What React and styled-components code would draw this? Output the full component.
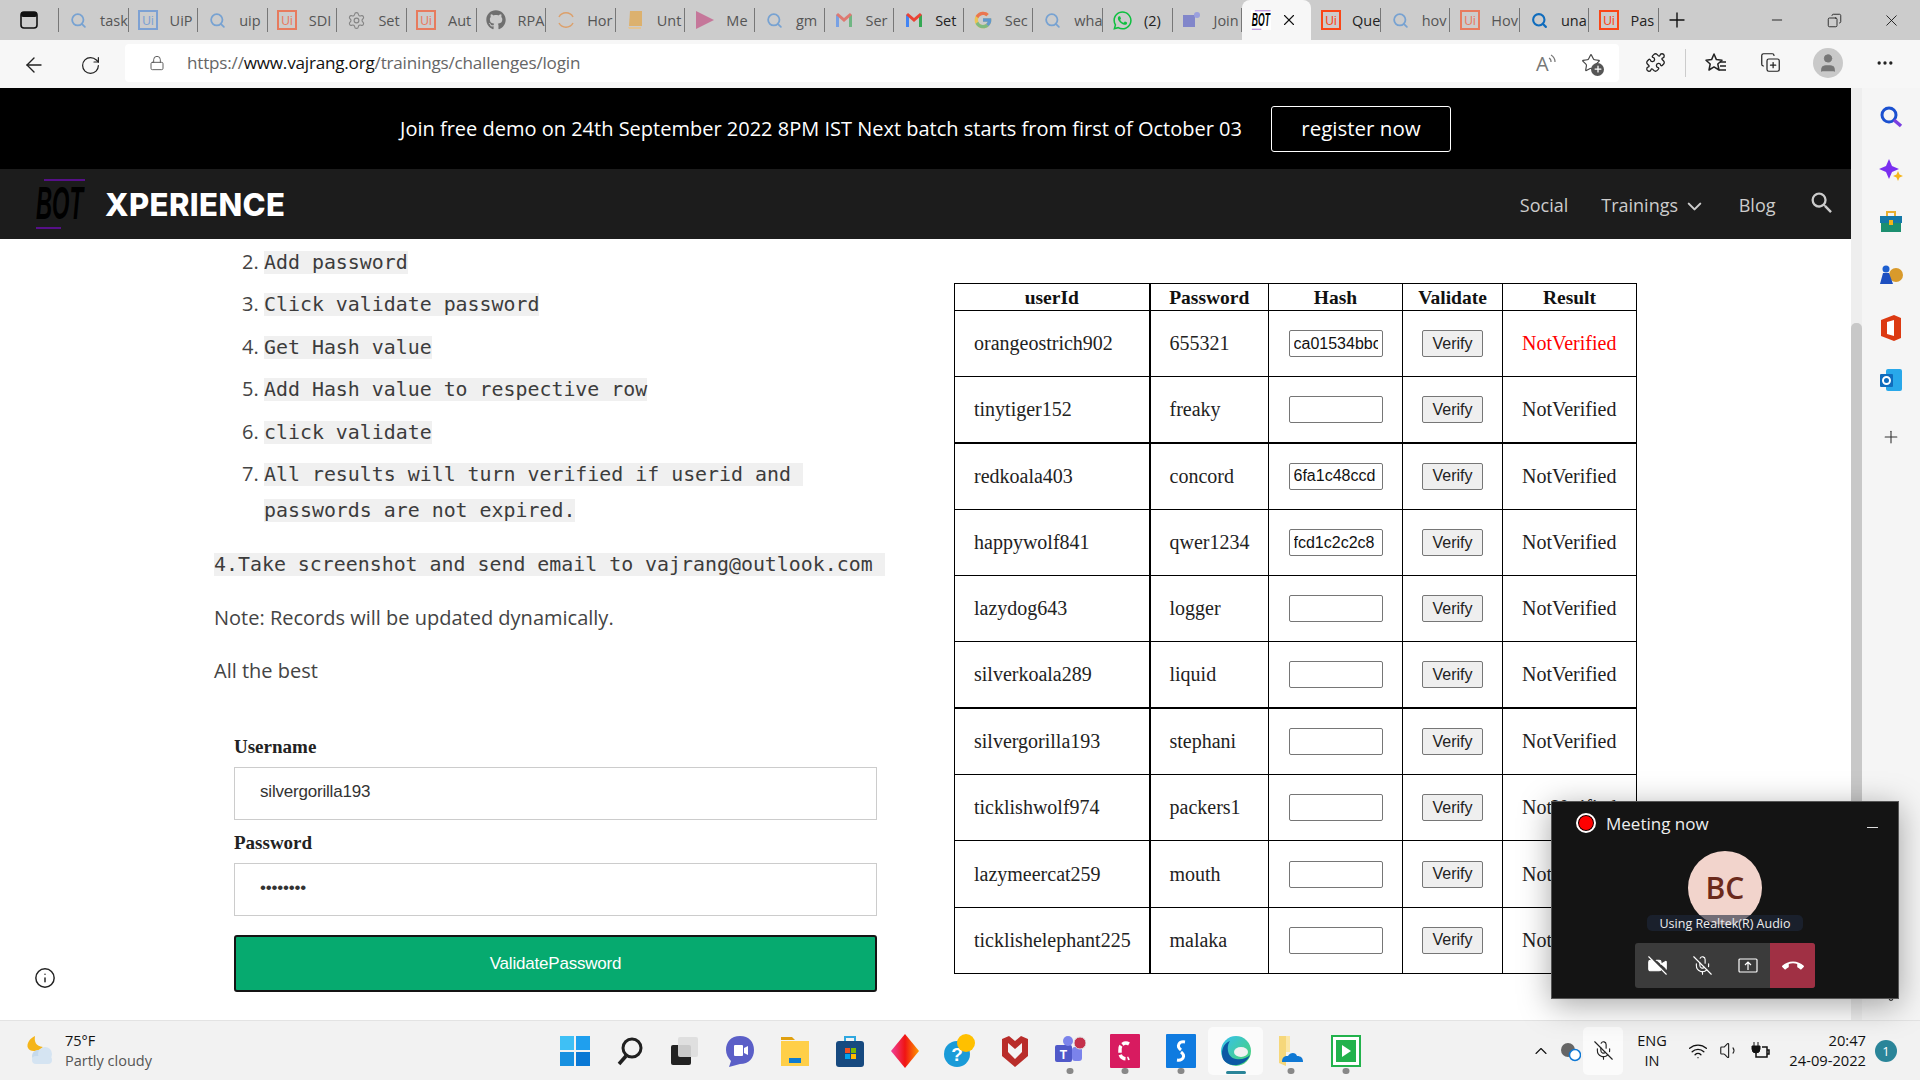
import React from "react";
import styled, { createGlobalStyle } from "styled-components";
import {
	ArrowLeft, RotateCw, Lock, Search, Settings, X, Plus, Minus, Copy, ChevronDown, ChevronUp,
	Info, Puzzle, Star, CopyPlus, Ellipsis, VideoOff, MicOff, Wifi, Volume1, User,
} from "lucide-react";
import { FaGithub, FaWhatsapp } from "react-icons/fa";
import { FcGoogle } from "react-icons/fc";
import { MdCallEnd, MdSearch } from "react-icons/md";

const GlobalStyle = createGlobalStyle`
	html, body { margin: 0; padding: 0; background: #fff; overflow: hidden; }
	* { box-sizing: border-box; }
`;

/* small drawn logos */
const UiLogo = ({ color = "#fa4616", size = 20 }) => (
	<svg width={size} height={size} viewBox="0 0 20 20">
		<rect x="1" y="1" width="18" height="18" fill="none" stroke={color} strokeWidth="2" />
		<text x="10" y="15" textAnchor="middle" fontSize="12" fontFamily="Liberation Sans" fill={color}>Ui</text>
	</svg>
);
const GmailLogo = () => (
	<svg width="20" height="20" viewBox="0 0 20 20">
		<path d="M2 17V5l3-1v13z" fill="#4285f4" />
		<path d="M15 17V4l3 1v12z" fill="#34a853" />
		<path d="M2 5l2-2 6 5 6-5 2 2-8 7z" fill="#ea4335" />
	</svg>
);
const BotMark = ({ width = 50, height = 52, color = "#000", line = "#6a0dad" }) => (
	<svg width={width} height={height} viewBox="0 0 50 52">
		<line x1="9" y1="2" x2="50" y2="2" stroke={line} strokeWidth="1.5" />
		<line x1="1" y1="50" x2="26" y2="50" stroke={line} strokeWidth="1.5" />
		<text transform="translate(1 41) scale(.93 1.9)" fontSize="24" fontWeight="700" fontStyle="italic" fontFamily="Liberation Sans" fill={color}>BOT</text>
	</svg>
);
const Glass = ({ color = "#3f87d6" }) => <Search size={17} color={color} strokeWidth={2.5} />;

const tabs = [
	{ icon: <Glass />, label: "task", dim: true },
	{ icon: <UiLogo color="#4a86d8" />, label: "UiP", dim: true },
	{ icon: <Glass />, label: "uip", dim: true },
	{ icon: <UiLogo />, label: "SDI", dim: true },
	{ icon: <Settings size={19} color="#555" strokeWidth={1.4} />, label: "Set", dim: true },
	{ icon: <UiLogo />, label: "Aut", dim: true },
	{ icon: <FaGithub size={20} color="#333" />, label: "RPA", dim: true },
	{ icon: <svg width="20" height="20" viewBox="0 0 20 20"><path d="M3 7a8 8 0 0 1 14 0M3 13a8 8 0 0 0 14 0" fill="none" stroke="#e8832a" strokeWidth="1.5" /></svg>, label: "Hor", dim: true },
	{ icon: <svg width="18" height="20" viewBox="0 0 18 20"><path d="M4 1h12v15H3z" fill="#e8a030" /><path d="M2 17h13v2H3z" fill="#f4c070" /></svg>, label: "Unt", dim: true },
	{ icon: <svg width="20" height="20" viewBox="0 0 20 20"><path d="M1 1l18 9-18 9z" fill="#c2407a" /></svg>, label: "Me", dim: true },
	{ icon: <Glass />, label: "gm", dim: true },
	{ icon: <GmailLogo />, label: "Ser", dim: true },
	{ icon: <GmailLogo />, label: "Set" },
	{ icon: <FcGoogle size={20} />, label: "Sec", dim: true },
	{ icon: <Glass />, label: "wha", dim: true },
	{ icon: <FaWhatsapp size={21} color="#0fbf40" />, label: "(2)" },
	{ icon: <svg width="20" height="20" viewBox="0 0 20 20"><rect x="1" y="5" width="12" height="12" fill="#5059c9" /><circle cx="15" cy="5" r="3" fill="#7b83eb" /></svg>, label: "Join", dim: true },
	{ active: true },
	{ icon: <UiLogo />, label: "Que" },
	{ icon: <Glass />, label: "hov", dim: true },
	{ icon: <UiLogo />, label: "Hov", dim: true },
	{ icon: <Search size={17} color="#0f6cbd" strokeWidth={3} />, label: "una" },
	{ icon: <UiLogo />, label: "Pas" },
];

const rows = [
	["orangeostrich902", "655321", "ca01534bbc2d9", "red"],
	["tinytiger152", "freaky", ""],
	["redkoala403", "concord", "6fa1c48ccd"],
	["happywolf841", "qwer1234", "fcd1c2c2c8"],
	["lazydog643", "logger", ""],
	["silverkoala289", "liquid", ""],
	["silvergorilla193", "stephani", ""],
	["ticklishwolf974", "packers1", ""],
	["lazymeercat259", "mouth", ""],
	["ticklishelephant225", "malaka", ""],
];

const steps = [
	"Add password",
	"Click validate password",
	"Get Hash value",
	"Add Hash value to respective row",
	"click validate",
	"All results will turn verified if userid and passwords are not expired.",
];

const sideIcons = [
	<svg width="24" height="24" viewBox="0 0 24 24" key="s"><circle cx="10" cy="10" r="7" fill="none" stroke="#1a50d0" strokeWidth="3" /><path d="M15 15l7 6" stroke="#7a3fe0" strokeWidth="3.5" /></svg>,
	<svg width="24" height="24" viewBox="0 0 24 24" key="b"><path d="M10 1l3 7 7 3-7 3-3 7-3-7-7-3 7-3z" fill="#7a2ff0" /><path d="M19 13l1.500 3.500L24 18l-3.500 1.500L19 23l-1.500-3.500L14 18l3.500-1.500z" fill="#f5b51a" /></svg>,
	<svg width="24" height="22" viewBox="0 0 24 22" key="t"><path d="M8 5V1h8v4" fill="none" stroke="#eab030" strokeWidth="2" /><rect x="1" y="5" width="22" height="7" fill="#1478a8" /><rect x="2" y="12" width="20" height="9" fill="#1c8f70" /><rect x="10" y="9" width="4" height="5" fill="#f5b51a" /></svg>,
	<svg width="24" height="22" viewBox="0 0 24 22" key="g"><circle cx="17" cy="11" r="7" fill="#d99a2b" /><circle cx="7" cy="5" r="3.500" fill="#1d5fd0" /><path d="M1 20l3-11h6l4 11z" fill="#1d4fc0" /></svg>,
	<svg width="24" height="28" viewBox="0 0 24 28" key="o"><path d="M2 6l13-5 7 3v20l-7 3L2 22z" fill="#dc3a12" /><path d="M8 8l7-2v16l-7-2z" fill="#fff" /></svg>,
	<svg width="24" height="24" viewBox="0 0 24 24" key="m"><rect x="7" y="1" width="16" height="22" rx="2" fill="#28a8ea" /><rect x="1" y="6" width="13" height="13" rx="1" fill="#0f6cbd" /><circle cx="7.500" cy="12.500" r="3.500" fill="none" stroke="#fff" strokeWidth="2" /></svg>,
	<Plus size={20} color="#333" strokeWidth={1.3} key="p" />,
];

const apps = [
	{ icon: <svg width="30" height="30" viewBox="0 0 30 30"><rect width="14" height="14" fill="#3fc0f5" /><rect x="16" width="14" height="14" fill="#1f9fee" /><rect y="16" width="14" height="14" fill="#1790e0" /><rect x="16" y="16" width="14" height="14" fill="#0a78d4" /></svg> },
	{ icon: <svg width="30" height="30" viewBox="0 0 30 30"><circle cx="17" cy="12" r="9" fill="none" stroke="#202020" strokeWidth="3" /><path d="M11 20l-7 8" stroke="#202020" strokeWidth="3.500" /></svg> },
	{ icon: <svg width="30" height="30" viewBox="0 0 30 30"><rect x="1" y="9" width="20" height="20" rx="2" fill="#222" /><rect x="8" y="1" width="20" height="20" rx="2" fill="#ddd" opacity=".9" /></svg> },
	{ icon: <svg width="30" height="32" viewBox="0 0 30 32"><path d="M15 1c9 0 14 6 14 14s-5 14-14 14l-11 3 2-6C3 23 1 19 1 15 1 7 6 1 15 1z" fill="#5b5fc7" /><rect x="9" y="10" width="9" height="11" rx="1" fill="#fff" /><path d="M19 13l4-2v9l-4-2z" fill="#fff" /></svg> },
	{ icon: <svg width="30" height="30" viewBox="0 0 30 30"><path d="M1 1h11l3 3H1z" fill="#e0a010" /><rect x="1" y="5" width="28" height="25" fill="#ffcf48" /><rect x="9" y="22" width="12" height="5" fill="#0f7bd0" /></svg> },
	{ icon: <svg width="30" height="32" viewBox="0 0 30 32"><path d="M10 7V2h10v5" fill="none" stroke="#30a8e0" strokeWidth="2" /><rect x="1" y="6" width="28" height="26" rx="3" fill="#174a80" /><rect x="10" y="13" width="5" height="5" fill="#f25022" /><rect x="16" y="13" width="5" height="5" fill="#7fba00" /><rect x="10" y="19" width="5" height="5" fill="#00a4ef" /><rect x="16" y="19" width="5" height="5" fill="#ffb900" /></svg> },
	{ icon: <svg width="30" height="34" viewBox="0 0 30 34"><defs><linearGradient id="dia" x1="0" x2="1"><stop offset="0" stopColor="#f0409a" /><stop offset=".5" stopColor="#f01414" /><stop offset="1" stopColor="#ff9a00" /></linearGradient></defs><path d="M15 0l14 17-14 17L1 17z" fill="url(#dia)" /></svg> },
	{ icon: <svg width="32" height="34" viewBox="0 0 32 34"><circle cx="13" cy="20" r="13" fill="#1a9bd8" /><text x="13" y="27" textAnchor="middle" fontSize="19" fontWeight="700" fontFamily="Liberation Sans" fill="#fff">?</text><circle cx="22" cy="9" r="9" fill="#ffc000" /></svg> },
	{ icon: <svg width="28" height="32" viewBox="0 0 28 32"><path d="M1 4l7-3 6 5 6-5 7 3v17L14 32 1 21z" fill="#b92d2a" /><path d="M7 8l7 6 7-6v9l-7 7-7-7z" fill="#f4f4f4" /></svg>, dot: false },
	{ icon: <svg width="32" height="32" viewBox="0 0 32 32"><rect x="1" y="10" width="17" height="17" rx="2" fill="#5059c9" /><rect x="18" y="12" width="10" height="14" rx="3" fill="#7b83eb" /><circle cx="14" cy="6" r="5" fill="#7b83eb" /><text x="9.500" y="24" textAnchor="middle" fontSize="12" fontWeight="700" fontFamily="Liberation Sans" fill="#fff">T</text><circle cx="26" cy="8" r="6" fill="#c4314b" stroke="#ddd" /></svg>, dot: true },
	{ icon: <svg width="30" height="34" viewBox="0 0 30 34"><rect width="30" height="34" rx="1" fill="#d81b60" /><path d="M19 10a6 6 0 0 0-9 6v2a6 6 0 0 0 9 6" fill="none" stroke="#fff" strokeWidth="3.500" strokeDasharray="7 2" /></svg>, dot: true },
	{ icon: <svg width="30" height="34" viewBox="0 0 30 34"><rect width="30" height="34" rx="1" fill="#0f7be0" /><path d="M19 8c-6-1-9 4-4 8M11 26c6 1 9-4 4-8" fill="none" stroke="#fff" strokeWidth="3" /></svg>, dot: true },
	{ icon: <svg width="32" height="32" viewBox="0 0 32 32"><defs><linearGradient id="edge" x1="0" y1="0" x2="1" y2="1"><stop offset="0" stopColor="#35c1f1" /><stop offset="1" stopColor="#4bd46a" /></linearGradient></defs><circle cx="16" cy="16" r="15" fill="url(#edge)" /><path d="M30 20C26 31 9 34 3 24 0 16 4 8 10 6c-4 5-3 17 6 18 6 1 11-1 14-4z" fill="#0c59a4" /><ellipse cx="21" cy="17" rx="7" ry="5" fill="#f2f2f2" /></svg>, active: true },
	{ icon: <svg width="26" height="32" viewBox="0 0 26 32"><path d="M1 1h7v30l-7-3z" fill="#f6d77a" /><path d="M8 1h4v16H8z" fill="#fbe6a6" /><path d="M4 27c0-6 4-6 6-6 2-4 8-4 9 0 4 0 6 2 6 6z" fill="#0f78d4" /></svg>, dot: true },
	{ icon: <svg width="30" height="32" viewBox="0 0 30 32"><rect width="30" height="32" fill="#fff" stroke="#22b24c" strokeWidth="4" /><rect x="5" y="5" width="20" height="22" fill="#22b24c" /><path d="M11 10l9 6-9 6z" fill="#fff" /></svg>, dot: true },
];

function App() {
	return (
		<Screen>
			<GlobalStyle />
			<TabStrip>
				<WorkspaceSlot>
					<svg width="18" height="18" viewBox="0 0 18 18"><rect x="1" y="1" width="16" height="16" rx="3" fill="none" stroke="#111" strokeWidth="1.600" /><rect x="1" y="1" width="16" height="5" rx="2" fill="#111" /></svg>
				</WorkspaceSlot>
				{tabs.map((t, i) =>
					t.active ? (
						<ActiveTab key={i}>
							<Favicon><BotMark width={20} height={20} /></Favicon>
							<X size={18} strokeWidth={1.500} color="#111" />
						</ActiveTab>
					) : (
						<Tab key={i}>
							<TabIcon $dim={t.dim}>{t.icon}</TabIcon>
							<TabLabel $dim={t.dim}>{t.label}</TabLabel>
						</Tab>
					)
				)}
				<NewTab><Plus size={24} strokeWidth={1.400} color="#111" /></NewTab>
				<WindowControls>
					<WindowButton><Minus size={16} strokeWidth={1.300} color="#111" /></WindowButton>
					<WindowButton><Copy size={15} strokeWidth={1.300} color="#111" style={{ transform: "scaleX(-1)" }} /></WindowButton>
					<WindowButton><X size={19} strokeWidth={1.100} color="#111" /></WindowButton>
				</WindowControls>
			</TabStrip>

			<Toolbar>
				<ToolSlot><ArrowLeft size={24} strokeWidth={1.400} color="#222" /></ToolSlot>
				<ToolSlot><RotateCw size={21} strokeWidth={1.400} color="#222" /></ToolSlot>
				<AddressBar>
					<Lock size={16} strokeWidth={1.400} color="#555" />
					<Url>https://<UrlHost>www.vajrang.org</UrlHost>/trainings/challenges/login</Url>
					<AddressTools>
						<AddressSlot>
							<svg width="24" height="30" viewBox="0 0 24 30"><text x="2" y="23" fontSize="20" fontFamily="Open Sans" fill="#777">A</text><path d="M15 10a4 4 0 0 1 2 4M17 7a8 8 0 0 1 4 7" fill="none" stroke="#777" strokeWidth="1.200" /></svg>
						</AddressSlot>
						<AddressSlot>
							<Star size={20} strokeWidth={1.400} color="#444" />
							<FavBadge><Plus size={10} strokeWidth={3} color="#fff" /></FavBadge>
						</AddressSlot>
					</AddressTools>
				</AddressBar>
				<ToolGroup>
					<ToolIcon><Puzzle size={21} strokeWidth={1.500} color="#222" /></ToolIcon>
					<ToolDivider />
					<ToolIcon>
						<svg width="24" height="24" viewBox="0 0 24 24"><path d="M10 3l2.400 5.600 5.600.6-4.200 3.800 1.200 6-5-3.100-5 3.100 1.200-6L2 9.200l5.600-.6z" fill="none" stroke="#222" strokeWidth="1.500" strokeLinejoin="round" /><path d="M16 11h6M16 15h6M15 19h7" stroke="#222" strokeWidth="1.500" /></svg>
					</ToolIcon>
					<ToolIcon $offset="14px"><CopyPlus size={21} strokeWidth={1.400} color="#222" /></ToolIcon>
					<ToolIcon $offset="18px">
						<Avatar><User size={22} color="#777" fill="#777" strokeWidth={1} /></Avatar>
					</ToolIcon>
					<ToolIcon $offset="17px"><Ellipsis size={20} color="#222" /></ToolIcon>
				</ToolGroup>
			</Toolbar>

			<Body>
				<Page>
					<Banner>
						<BannerText>Join free demo on 24th September 2022 8PM IST Next batch starts from first of October 03</BannerText>
						<RegisterButton>register now</RegisterButton>
					</Banner>
					<Nav>
						<Brand>
							<BotMark />
							<BrandName>XPERIENCE</BrandName>
						</Brand>
						<NavLinks>
							<NavLink>Social</NavLink>
							<NavLink>Trainings <ChevronDown size={23} strokeWidth={2.200} style={{ verticalAlign: "-6px" }} /></NavLink>
							<NavLink>Blog</NavLink>
							<NavSearch><MdSearch size={28} color="#ccc" /></NavSearch>
						</NavLinks>
					</Nav>
					<Content>
						<LeftColumn>
							<Steps start={2}>
								{steps.map((s) => (
									<Step key={s}><Code>{s}</Code></Step>
								))}
							</Steps>
							<Instruction><Code>4.Take screenshot and send email to vajrang@outlook.com </Code></Instruction>
							<Paragraph>Note: Records will be updated dynamically.</Paragraph>
							<Paragraph>All the best</Paragraph>
							<LoginForm>
								<FieldLabel>Username</FieldLabel>
								<TextInput readOnly value="silvergorilla193" />
								<FieldLabel>Password</FieldLabel>
								<TextInput readOnly type="password" value="stephani" />
								<ValidateButton type="button">ValidatePassword</ValidateButton>
							</LoginForm>
							<InfoSpot><Info size={22} strokeWidth={1.600} color="#222" /></InfoSpot>
						</LeftColumn>
						<UsersTable>
							<colgroup>
								<col width="195" /><col width="119" /><col width="134" /><col width="100" /><col width="134" />
							</colgroup>
							<thead>
								<tr>
									<HeadCell $strong>userId</HeadCell>
									<HeadCell>Password</HeadCell>
									<HeadCell>Hash</HeadCell>
									<HeadCell>Validate</HeadCell>
									<HeadCell>Result</HeadCell>
								</tr>
							</thead>
							<tbody>
								{rows.map((r, i) => (
									<BodyRow key={r[0]} $thick={i === 1 || i === 5}>
										<Cell $strong>{r[0]}</Cell>
										<Cell>{r[1]}</Cell>
										<CenterCell><HashInput readOnly value={r[2]} /></CenterCell>
										<CenterCell><VerifyButton type="button">Verify</VerifyButton></CenterCell>
										<Cell $color={r[3]}>NotVerified</Cell>
									</BodyRow>
								))}
							</tbody>
						</UsersTable>
					</Content>
				</Page>
				<ScrollTrack><ScrollThumb /></ScrollTrack>
				<SideRail>
					{sideIcons.map((ic, i) => (
						<SideIcon key={i} $last={i === sideIcons.length - 1}>{ic}</SideIcon>
					))}
					<SideFooter><Settings size={20} strokeWidth={1.400} color="#333" /></SideFooter>
				</SideRail>
			</Body>

			<Taskbar>
				<Weather>
					<svg width="32" height="32" viewBox="0 0 32 32"><path d="M11 1c-1 6 1 10 8 11-3 4-13 6-15 1C2 9 6 3 11 1z" fill="#f5b51a" /><circle cx="14" cy="21" r="6" fill="#c5d9ec" /><circle cx="21" cy="19" r="7" fill="#d5e4f2" /><rect x="8" y="21" width="20" height="8" rx="4" fill="#d5e4f2" /></svg>
					<WeatherText>
						<Temp>75°F</Temp>
						<Forecast>Partly cloudy</Forecast>
					</WeatherText>
				</Weather>
				<AppRow>
					{apps.map((a, i) => (
						<AppCell key={i} $active={a.active} $dot={a.dot}>{a.icon}</AppCell>
					))}
				</AppRow>
				<Tray>
					<TrayItem $w="32px"><ChevronUp size={20} strokeWidth={1.300} color="#111" /></TrayItem>
					<TrayItem $w="26px">
						<svg width="22" height="22" viewBox="0 0 22 22"><circle cx="9" cy="10" r="7" fill="#666" /><circle cx="16" cy="15" r="5.500" fill="#fff" stroke="#0f78d4" strokeWidth="1.500" /></svg>
					</TrayItem>
					<MicPill><MicOff size={21} strokeWidth={1.300} color="#222" /></MicPill>
					<LangBlock><span>ENG</span><span>IN</span></LangBlock>
					<TrayItem $w="34px"><Wifi size={20} strokeWidth={1.600} color="#111" /></TrayItem>
					<TrayItem $w="29px"><Volume1 size={21} strokeWidth={1.300} color="#222" /></TrayItem>
					<TrayItem $w="32px">
						<svg width="22" height="22" viewBox="0 0 22 22"><path d="M5 2v4M9 2v4M3 6h8v3a4 4 0 0 1-8 0z" fill="#111" stroke="#111" /><path d="M7 13v4h11V7h-5M18 10h2v4h-2" fill="none" stroke="#111" strokeWidth="1.500" /></svg>
					</TrayItem>
					<Clock><span>20:47</span><span>24-09-2022</span></Clock>
					<Badge>1</Badge>
				</Tray>
			</Taskbar>

			<MeetingPopup>
				<MeetingHeader>
					<RecordDot />
					<MeetingTitle>Meeting now</MeetingTitle>
					<MeetingMin />
				</MeetingHeader>
				<MeetingAvatar>BC</MeetingAvatar>
				<AudioPill>Using Realtek(R) Audio</AudioPill>
				<CallBar>
					<CallButton><VideoOff size={21} color="#fff" fill="#fff" strokeWidth={1.300} /></CallButton>
					<CallButton><MicOff size={21} color="#fff" strokeWidth={1.300} /></CallButton>
					<CallButton>
						<svg width="20" height="16" viewBox="0 0 20 16"><rect x="1" y="1" width="18" height="13" rx="1" fill="none" stroke="#fff" strokeWidth="1.200" /><path d="M10 12V4M7 7l3-3 3 3" fill="none" stroke="#fff" strokeWidth="1.200" /></svg>
					</CallButton>
					<HangUp><MdCallEnd size={22} color="#fff" /></HangUp>
				</CallBar>
			</MeetingPopup>
		</Screen>
	);
}

const Screen = styled.div`
	position: relative;
	width: 1920px;
	height: 1080px;
	display: flex;
	flex-direction: column;
	overflow: hidden;
	font-family: "Open Sans", sans-serif;
`;
const TabStrip = styled.div`
	height: 40px;
	flex: none;
	display: flex;
	align-items: stretch;
	background: #ccc;
`;
const WorkspaceSlot = styled.div`
	width: 59px;
	display: flex;
	align-items: center;
	justify-content: center;
	border-right: 1px solid #777;
	margin: 8px 0;
`;
const Tab = styled.div`
	width: 69.6px;
	margin: 8px 0;
	padding-left: 9px;
	display: flex;
	align-items: center;
	border-right: 1px solid #777;
	overflow: hidden;
`;
const TabIcon = styled.div`
	width: 21px;
	flex: none;
	display: flex;
	justify-content: center;
	opacity: ${(p) => (p.$dim ? 0.6 : 1)};
`;
const TabLabel = styled.span`
	margin-left: 11px;
	font-size: 14.500px;
	white-space: nowrap;
	color: ${(p) => (p.$dim ? "#555" : "#222")};
`;
const ActiveTab = styled.div`
	width: 69px;
	display: flex;
	align-items: center;
	justify-content: space-between;
	padding: 0 13px 0 9px;
	background: #f7f7f7;
	border-radius: 8px 8px 0 0;
`;
const Favicon = styled.div`
	width: 20px;
	height: 20px;
	background: #fff;
	display: flex;
`;
const NewTab = styled.div`
	width: 36px;
	display: flex;
	align-items: center;
	justify-content: center;
`;
const WindowControls = styled.div`
	margin-left: auto;
	display: flex;
`;
const WindowButton = styled.div`
	width: 57.3px;
	display: flex;
	align-items: center;
	justify-content: center;
`;
const Toolbar = styled.div`
	height: 48px;
	flex: none;
	display: flex;
	align-items: center;
	gap: 12px;
	padding-left: 12px;
	padding-top: 2px;
	background: #f7f7f7;
`;
const ToolSlot = styled.div`
	width: 44px;
	display: flex;
	justify-content: center;
`;
const AddressBar = styled.div`
	width: 1494px;
	height: 38px;
	margin-left: 1px;
	margin-bottom: 5px;
	display: flex;
	align-items: center;
	padding-left: 24px;
	background: #fff;
	border-radius: 4px;
`;
const Url = styled.span`
	margin-left: 22px;
	font-size: 17.100px;
	letter-spacing: -0.200px;
	color: #666;
`;
const UrlHost = styled.span`
	color: #111;
`;
const AddressTools = styled.div`
	margin-left: auto;
	padding-right: 10px;
	display: flex;
	align-items: center;
	gap: 9px;
`;
const AddressSlot = styled.div`
	position: relative;
	width: 36px;
	display: flex;
	justify-content: center;
`;
const FavBadge = styled.span`
	position: absolute;
	right: 5px;
	bottom: -3px;
	width: 13px;
	height: 13px;
	display: flex;
	align-items: center;
	justify-content: center;
	background: #555;
	border-radius: 50%;
`;
const ToolGroup = styled.div`
	display: flex;
	align-items: center;
	margin-left: 4px;
	margin-bottom: 5px;
`;
const ToolIcon = styled.div`
	width: 40px;
	margin-left: ${(p) => p.$offset || 0};
	display: flex;
	justify-content: center;
`;
const ToolDivider = styled.div`
	width: 1px;
	height: 28px;
	margin: 0 10px;
	background: #ccc;
`;
const Avatar = styled.div`
	width: 30px;
	height: 30px;
	display: flex;
	align-items: center;
	justify-content: center;
	background: #c9c9c9;
	border-radius: 50%;
`;
const Body = styled.div`
	flex: 1;
	min-height: 0;
	display: flex;
`;
const Page = styled.div`
	width: 1851px;
	flex: none;
	display: flex;
	flex-direction: column;
	background: #fff;
`;
const Banner = styled.div`
	height: 81px;
	flex: none;
	display: flex;
	align-items: center;
	justify-content: center;
	gap: 29px;
	background: #000;
`;
const BannerText = styled.span`
	font-size: 20px;
	color: #fff;
`;
const RegisterButton = styled.button`
	width: 180px;
	height: 46px;
	padding: 0 0 2px;
	font-family: "Open Sans", sans-serif;
	font-size: 20.500px;
	color: #fff;
	background: transparent;
	border: 1px solid #fff;
	border-radius: 3px;
`;
const Nav = styled.div`
	height: 70px;
	flex: none;
	display: flex;
	align-items: center;
	justify-content: space-between;
	padding: 0 15px 0 35px;
	background: #1c1c1c;
`;
const Brand = styled.div`
	display: flex;
	align-items: center;
	gap: 20px;
`;
const BrandName = styled.span`
	font-family: "Inter", sans-serif;
	font-size: 31px;
	font-weight: 800;
	letter-spacing: 0.400px;
	color: #fff;
`;
const NavLinks = styled.div`
	display: flex;
	align-items: center;
	gap: 33px;
	padding-top: 2px;
`;
const NavLink = styled.a`
	font-size: 18px;
	color: #ccc;
`;
const NavSearch = styled.span`
	display: flex;
	margin: -4px 0 0 -0.500px;
`;
const Content = styled.div`
	position: relative;
	flex: 1;
	min-height: 0;
	display: flex;
	align-items: flex-start;
	padding-left: 214px;
`;
const LeftColumn = styled.div`
	width: 740px;
	flex: none;
	padding-top: 5px;
`;
const Steps = styled.ol`
	width: 672px;
	margin: 0;
	padding-left: 50px;
	font-size: 20px;
	color: #444;
`;
const Step = styled.li`
	line-height: 35.500px;
	margin-bottom: 5.900px;
`;
const Code = styled.code`
	font-family: "DejaVu Sans Mono", monospace;
	font-size: 19.900px;
	white-space: pre-wrap;
	color: #3c3c3c;
	background: #f0f0f0;
`;
const Instruction = styled.p`
	margin: 18px 0 0;
	line-height: 36px;
`;
const Paragraph = styled.p`
	margin: 17px 0 0;
	font-size: 20px;
	line-height: 36px;
	color: #444;
`;
const LoginForm = styled.form`
	width: 643px;
	margin: 47px 0 0 20px;
	display: flex;
	flex-direction: column;
`;
const FieldLabel = styled.label`
	font-family: "Liberation Serif", serif;
	font-size: 19px;
	font-weight: 700;
	line-height: 22px;
	color: #222;
	margin-bottom: 9.500px;
`;
const TextInput = styled.input`
	height: 53px;
	margin-bottom: 11.500px;
	padding: 0 25px 4px;
	font-family: "Liberation Sans", sans-serif;
	font-size: 17px;
	letter-spacing: -0.200px;
	color: #333;
	background: #fff;
	border: 1px solid #ccc;
	outline: none;
`;
const ValidateButton = styled.button`
	height: 57px;
	margin-top: 7.500px;
	font-family: "Liberation Sans", sans-serif;
	font-size: 17px;
	letter-spacing: -0.200px;
	color: #fff;
	background: #06aa6f;
	border: 2px solid #141414;
	border-radius: 3px;
`;
const InfoSpot = styled.div`
	position: absolute;
	left: 34px;
	top: 728px;
	display: flex;
`;
const UsersTable = styled.table`
	width: 682px;
	margin-top: 44px;
	flex: none;
	table-layout: fixed;
	border-collapse: collapse;
	font-family: "Liberation Serif", serif;
	font-size: 20px;
	color: #111;
`;
const HeadCell = styled.th`
	height: 27px;
	padding: 1px 0 0;
	font-size: 19.500px;
	font-weight: 700;
	border: 1px solid #000;
	border-right-width: ${(p) => (p.$strong ? "2px" : "1px")};
`;
const BodyRow = styled.tr`
	height: 66.300px;
	border-bottom: ${(p) => (p.$thick ? "2px" : "1px")} solid #000;
`;
const Cell = styled.td`
	padding: 0 0 0 19px;
	white-space: nowrap;
	color: ${(p) => p.$color || "#222"};
	border: 1px solid #000;
	border-bottom: none;
	border-right-width: ${(p) => (p.$strong ? "2px" : "1px")};
`;
const CenterCell = styled.td`
	padding: 0;
	text-align: center;
	border: 1px solid #000;
	border-bottom: none;
`;
const HashInput = styled.input`
	width: 94px;
	height: 27px;
	padding: 1px 4px;
	font-family: "Liberation Sans", sans-serif;
	font-size: 16px;
	color: #111;
	background: #fff;
	border: 1px solid #767676;
	border-radius: 2px;
	outline: none;
	vertical-align: middle;
`;
const VerifyButton = styled.button`
	width: 61px;
	height: 27px;
	padding: 0;
	font-family: "Liberation Sans", sans-serif;
	font-size: 16px;
	color: #222;
	background: #efefef;
	border: 1px solid #767676;
	border-radius: 2px;
	vertical-align: middle;
`;
const ScrollTrack = styled.div`
	width: 11px;
	flex: none;
	padding-top: 235px;
	background: #eee;
`;
const ScrollThumb = styled.div`
	height: 480px;
	background: #c8c8c8;
	border-radius: 5px 5px 0 0;
`;
const SideRail = styled.div`
	flex: 1;
	display: flex;
	flex-direction: column;
	align-items: center;
	padding: 14px 0 18px;
	gap: 22.700px;
	background: #f5f5f5;
`;
const SideIcon = styled.div`
	height: 30px;
	display: flex;
	align-items: center;
	justify-content: center;
	margin-top: ${(p) => (p.$last ? "4px" : "0")};
`;
const SideFooter = styled.div`
	margin-top: auto;
	display: flex;
`;
const Taskbar = styled.div`
	height: 60px;
	flex: none;
	display: flex;
	align-items: center;
	background: #f2f2f2;
	border-top: 1px solid #e3e3e3;
`;
const Weather = styled.div`
	width: 547.500px;
	flex: none;
	padding-left: 24px;
	display: flex;
	align-items: center;
	gap: 9px;
`;
const WeatherText = styled.div`
	display: flex;
	flex-direction: column;
	gap: 2px;
`;
const Temp = styled.span`
	font-size: 14.500px;
	line-height: 18px;
	color: #111;
`;
const Forecast = styled.span`
	font-size: 14.500px;
	line-height: 18px;
	color: #555;
`;
const AppRow = styled.div`
	display: flex;
`;
const AppCell = styled.div`
	position: relative;
	width: 55.050px;
	height: 48px;
	display: flex;
	align-items: center;
	justify-content: center;
	background: ${(p) => (p.$active ? "#fbfbfb" : "transparent")};
	border-radius: 5px;
	&::after {
		content: "";
		display: ${(p) => (p.$dot || p.$active ? "block" : "none")};
		position: absolute;
		left: 50%;
		bottom: 1px;
		width: ${(p) => (p.$active ? "20px" : "7px")};
		height: ${(p) => (p.$active ? "3px" : "6px")};
		transform: translateX(-50%);
		background: ${(p) => (p.$active ? "#2a8599" : "#888")};
		border-radius: 3px;
	}
`;
const Tray = styled.div`
	margin-left: auto;
	padding-right: 23px;
	display: flex;
	align-items: center;
`;
const TrayItem = styled.div`
	width: ${(p) => p.$w};
	display: flex;
	justify-content: center;
`;
const MicPill = styled.div`
	width: 40px;
	height: 48px;
	display: flex;
	align-items: center;
	justify-content: center;
	background: #fbfbfb;
	border-radius: 5px;
`;
const LangBlock = styled.div`
	width: 58px;
	display: flex;
	flex-direction: column;
	align-items: center;
	gap: 1px;
	font-size: 14.500px;
	line-height: 19px;
	color: #111;
`;
const Clock = styled.div`
	width: 90px;
	display: flex;
	flex-direction: column;
	align-items: flex-end;
	gap: 1px;
	font-size: 14.700px;
	line-height: 19px;
	color: #111;
`;
const Badge = styled.div`
	width: 22px;
	height: 22px;
	margin-left: 9px;
	display: flex;
	align-items: center;
	justify-content: center;
	font-size: 13px;
	color: #fff;
	background: #2a8599;
	border-radius: 50%;
`;
const MeetingPopup = styled.div`
	position: absolute;
	top: 801px;
	left: 1551px;
	width: 348px;
	height: 198px;
	display: flex;
	flex-direction: column;
	align-items: center;
	background: #141414;
	border: 1px solid #555;
	box-shadow: 0 6px 30px rgba(0, 0, 0, 0.35);
`;
const MeetingHeader = styled.div`
	width: 100%;
	height: 42px;
	flex: none;
	display: flex;
	align-items: center;
	padding: 0 20px 0 24px;
`;
const RecordDot = styled.span`
	width: 20px;
	height: 20px;
	background: #f00;
	border: 2px solid #fff;
	border-radius: 50%;
	box-shadow: inset 0 0 0 1px #000;
`;
const MeetingTitle = styled.span`
	margin-left: 10px;
	font-size: 17px;
	color: #eee;
`;
const MeetingMin = styled.span`
	margin: 8px 0 0 auto;
	width: 11px;
	height: 1px;
	background: #ddd;
`;
const MeetingAvatar = styled.div`
	width: 74px;
	height: 74px;
	margin-top: 7px;
	padding-bottom: 2px;
	flex: none;
	display: flex;
	align-items: center;
	justify-content: center;
	font-size: 30px;
	font-weight: 600;
	color: #6b2a1c;
	background: #f2d4cc;
	border-radius: 50%;
`;
const AudioPill = styled.div`
	position: relative;
	width: 156px;
	height: 16px;
	margin-top: -10px;
	flex: none;
	display: flex;
	align-items: center;
	justify-content: center;
	font-size: 12.500px;
	white-space: nowrap;
	color: #eee;
	background: rgba(30, 40, 60, 0.6);
	border-radius: 5px;
`;
const CallBar = styled.div`
	width: 180px;
	height: 45px;
	margin-top: 12px;
	display: flex;
	background: #3b3b3b;
	border-radius: 3px;
	overflow: hidden;
`;
const CallButton = styled.div`
	width: 45px;
	display: flex;
	align-items: center;
	justify-content: center;
`;
const HangUp = styled(CallButton)`
	background: #a03044;
`;

export default App;
